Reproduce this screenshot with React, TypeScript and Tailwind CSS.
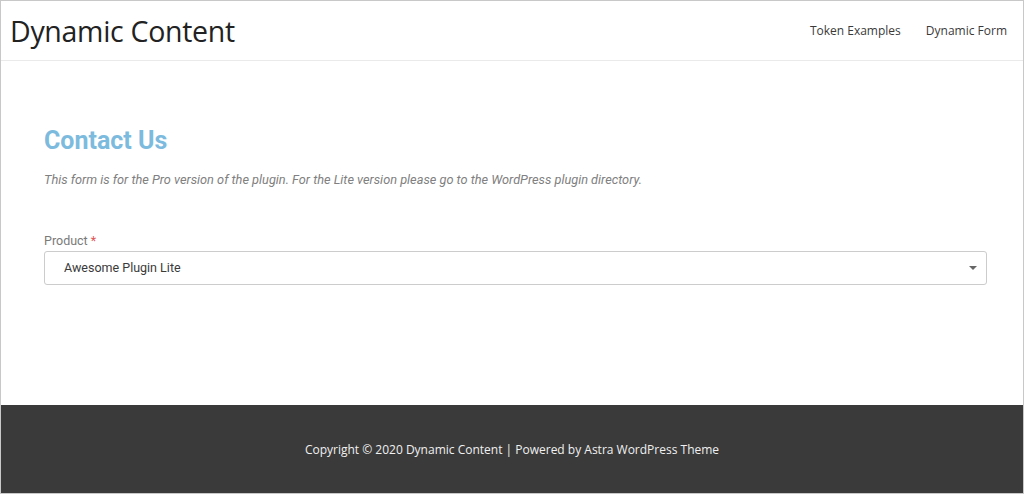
export default function App() {
  return (
    <div className="w-[1024px] h-[494px] border border-[#c8c8c8] bg-white flex flex-col overflow-hidden">
      <header className="h-[60px] shrink-0 border-b border-[#eaeaea] flex items-center justify-between pl-[9px] pr-[16px]" style={{ fontFamily: '"Open Sans", "Noto Sans", sans-serif' }}>
        <div className="text-[28.5px] text-[#222] leading-none tracking-[-0.3px] mt-[2px]">Dynamic Content</div>
        <nav className="flex items-center gap-[25px] text-[12px] text-[#3a3a3a] mt-[1px]">
          <span>Token Examples</span>
          <span>Dynamic Form</span>
        </nav>
      </header>
      <main className="flex-1 pl-[43px] pr-[36px] pt-[67px]" style={{ fontFamily: 'Roboto, sans-serif' }}>
        <h1 className="text-[25px] font-bold text-[#7dbbde] leading-none">Contact Us</h1>
        <p className="mt-[21px] text-[12.75px] italic text-[#808080] leading-none">
          This form is for the Pro version of the plugin. For the Lite version please go to the WordPress plugin directory.
        </p>
        <div className="mt-[48px] text-[12.5px] text-[#7a7a7a] leading-none">
          Product <span className="text-[#e05555]">*</span>
        </div>
        <div className="mt-[4px] h-[34px] border border-[#cccccc] rounded-[3px] flex items-center justify-between pl-[19px] pr-[9px]">
          <span className="text-[12.5px] text-[#3a3a3a]">Awesome Plugin Lite</span>
          <span className="w-0 h-0 border-l-[4px] border-r-[4px] border-t-[4px] border-l-transparent border-r-transparent border-t-[#666]" />
        </div>
      </main>
      <footer className="h-[88px] shrink-0 bg-[#3a3a3a] flex items-center justify-center text-[12px] text-[#f0f0f0] pt-[2px]" style={{ fontFamily: '"Open Sans", "Noto Sans", sans-serif' }}>
        Copyright © 2020 Dynamic Content | Powered by Astra WordPress Theme
      </footer>
    </div>
  );
}
